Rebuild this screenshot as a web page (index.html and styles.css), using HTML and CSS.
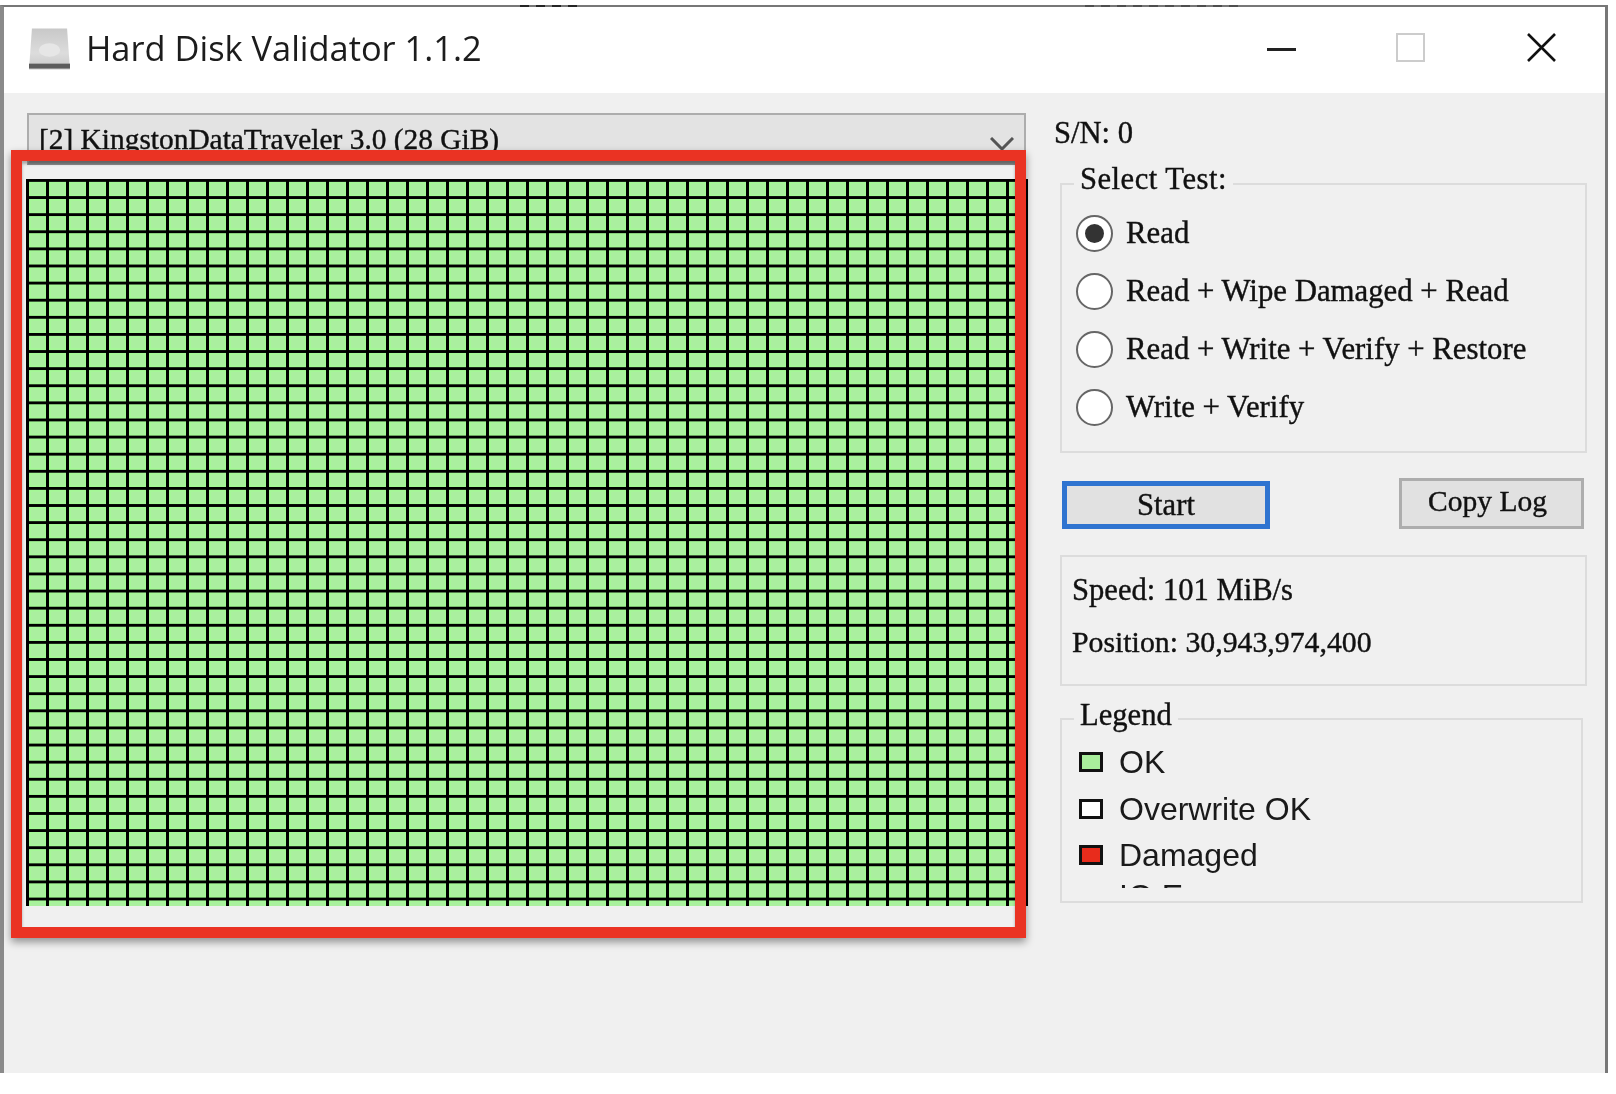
FILE: index.html
```html
<!DOCTYPE html>
<html lang="en">

<head>
    <meta charset="UTF-8">
    <title>Hard Disk Validator 1.1.2</title>
    <link rel="stylesheet" href="styles.css">
</head>

<body>
    <div class="window">
        <!-- Title bar -->
        <div class="titlebar">
            <svg class="app-icon" viewBox="0 0 42 42">
                <defs>
                    <linearGradient id="drive" x1="0" y1="0" x2="0" y2="1">
                        <stop offset="0" stop-color="#c8c8c8" />
                        <stop offset="0.6" stop-color="#dcdcdc" />
                        <stop offset="1" stop-color="#c8c8c8" />
                    </linearGradient>
                </defs>
                <path d="M3 0h36l3 42H0z" fill="url(#drive)" />
                <rect x="0" y="36" width="42" height="5" fill="#5c5c5c" />
                <ellipse cx="21" cy="22" rx="11" ry="7" fill="#e6e6e6" />
            </svg>
            <span class="app-title">Hard Disk Validator 1.1.2</span>
            <div class="caption-buttons">
                <span class="btn-min"></span>
                <span class="btn-max"></span>
                <svg class="btn-close" viewBox="0 0 29 29">
                    <path d="M1 1l27 27M28 1L1 28" stroke="#111" stroke-width="2.6" fill="none" />
                </svg>
            </div>
        </div>

        <div class="client">
            <!-- Left side: drive select and block map -->
            <div class="left-col">
                <div class="combo serif">
                    <span>[2] KingstonDataTraveler 3.0 (28 GiB)</span>
                    <svg class="combo-arrow" viewBox="0 0 24 14">
                        <path d="M1 1l11 11L23 1" stroke="#555" stroke-width="3" fill="none" />
                    </svg>
                </div>
                <div class="block-map"></div>
            </div>

            <!-- Right side: options -->
            <div class="right-col serif">
                <div class="serial">S/N: 0</div>

                <div class="group test-group">
                    <span class="group-title">Select Test:</span>
                    <label class="radio-row"><span class="radio checked"></span>Read</label>
                    <label class="radio-row"><span class="radio"></span>Read + Wipe Damaged + Read</label>
                    <label class="radio-row"><span class="radio"></span>Read + Write + Verify + Restore</label>
                    <label class="radio-row"><span class="radio"></span>Write + Verify</label>
                </div>

                <div class="actions">
                    <button class="btn btn-start">Start</button>
                    <button class="btn btn-copy">Copy Log</button>
                </div>

                <div class="group stats">
                    <div>Speed: 101 MiB/s</div>
                    <div class="position">Position: 30,943,974,400</div>
                </div>

                <div class="group legend">
                    <span class="group-title">Legend</span>
                    <ul class="legend-list">
                        <li><span class="swatch ok"></span>OK</li>
                        <li><span class="swatch overwrite"></span>Overwrite OK</li>
                        <li><span class="swatch damaged"></span>Damaged</li>
                        <li><span class="swatch none"></span>IO Error</li>
                    </ul>
                </div>
            </div>
        </div>
    </div>

    <!-- Bits of the page behind the window, showing along its top edge -->
    <span class="behind behind-a"></span>
    <span class="behind behind-b"></span>

    <!-- Red annotation frame -->
    <div class="highlight"></div>
</body>

</html>
```

FILE: styles.css
```css
html,
body {
    margin: 0;
    height: 1094px;
    overflow: hidden;
    background: #fff;
}

.window {
    box-sizing: border-box;
    width: 1608px;
    height: 1068px;
    margin-top: 5px;
    border-top: 2px solid #777;
    border-left: 4px solid #8a8a8a;
    border-right: 3px solid #777;
    background: #f0f0f0;
    display: flex;
    flex-direction: column;
    filter: blur(0.6px);
}

.titlebar {
    height: 86px;
    background: #fff;
    display: flex;
    align-items: center;
    flex-shrink: 0;
}

.app-icon {
    width: 41px;
    height: 42px;
    margin-left: 25px;
    margin-top: -2px;
}

.app-title {
    margin-left: 16px;
    font-family: "Open Sans", sans-serif;
    font-size: 34.4px;
    color: #1c1c1c;
    margin-top: -5px;
}

.caption-buttons {
    margin-left: auto;
    margin-right: 49px;
    display: flex;
    align-items: center;
    margin-top: -6px;
}

.btn-min {
    width: 29px;
    height: 3px;
    background: #222;
    margin-right: 100px;
    margin-top: 4px;
}

.btn-max {
    box-sizing: border-box;
    width: 29px;
    height: 29px;
    border: 2px solid #ccc;
    margin-right: 102px;
}

.btn-close {
    width: 29px;
    height: 29px;
}

.client {
    flex: 1;
    display: flex;
    min-height: 0;
}

.serif {
    font-family: "Liberation Serif", serif;
    font-size: 30.6px;
    color: #111;
    -webkit-text-stroke: 0.4px #111;
}

.left-col {
    width: 1024px;
    padding: 20px 0 0 23px;
    flex-shrink: 0;
    box-sizing: border-box;
}

.combo {
    box-sizing: border-box;
    height: 52px;
    width: 999px;
    background: #e3e3e3;
    border: 2px solid #adadad;
    border-bottom: 4px solid #8e8e8e;
    padding: 6px 0 0 10px;
    display: flex;
    font-size: 29.4px;
    line-height: 36px;
    white-space: nowrap;
}

.combo-arrow {
    margin: 16px 10px 0 auto;
    width: 24px;
    height: 14px;
}

/* black lines first, then the lighter rim of each cell */
.block-map {
    width: 1002px;
    height: 727px;
    margin: 14px 0 0 -1px;
    background-color: #aaef9f;
    background-image:
        linear-gradient(to right, #000 3px, transparent 3px),
        linear-gradient(to bottom, #000 3px, transparent 3px),
        linear-gradient(to right, transparent 3px, #a4f796 3px, #a4f796 5px, transparent 5px, transparent 18px, #a4f796 18px),
        linear-gradient(to bottom, transparent 3px, #a4f796 3px, #a4f796 5px, transparent 5px, transparent 15px, #a4f796 15px);
    background-size: 20px 17.12px;
}

.right-col {
    flex: 1;
    padding-left: 32px;
    min-width: 0;
}

.serial {
    margin: 22px 0 0 -6px;
    line-height: 36px;
}

.group {
    box-sizing: border-box;
    position: relative;
    width: 527px;
    border: 2px solid #dcdcdc;
}

.group-title {
    position: absolute;
    left: 12px;
    top: -24px;
    background: #f0f0f0;
    padding: 0 6px;
    line-height: 36px;
    letter-spacing: 0.5px;
}

.test-group {
    height: 270px;
    margin-top: 32px;
    padding: 30px 0 0 14px;
}

.radio-row {
    display: flex;
    align-items: center;
    height: 37px;
    margin-bottom: 21px;
    font-size: 30.8px;
    line-height: 37px;
    white-space: nowrap;
}

.radio {
    box-sizing: border-box;
    width: 37px;
    height: 37px;
    border-radius: 50%;
    border: 2.5px solid #666;
    background: #fff;
    margin-right: 13px;
    flex-shrink: 0;
    display: flex;
    align-items: center;
    justify-content: center;
}

.radio.checked::after {
    content: "";
    width: 19px;
    height: 19px;
    border-radius: 50%;
    background: #333;
}

.actions {
    width: 522px;
    display: flex;
    justify-content: space-between;
    align-items: flex-end;
    margin: 25px 0 26px 2px;
}

.btn {
    box-sizing: border-box;
    font: inherit;
    color: inherit;
    background: #e1e1e1;
    padding: 0;
    border-radius: 0;
}

.btn-start {
    width: 208px;
    height: 48px;
    border: 5px solid #2f74d0;
}

.btn-copy {
    width: 185px;
    height: 51px;
    border: 3px solid #adadad;
    padding: 0 8px 5px 0;
    font-size: 29.5px;
}

.stats {
    height: 131px;
    padding: 15px 0 0 10px;
    line-height: 36px;
}

.stats .position {
    margin-top: 16px;
    font-size: 29.8px;
}

.legend {
    width: 523px;
    height: 185px;
    margin-top: 32px;
}

.legend .group-title {
    top: -23px;
    letter-spacing: 0;
}

.legend-list {
    list-style: none;
    margin: 0;
    padding: 0 0 0 17px;
    height: 168px;
    overflow: hidden;
    font-family: "Liberation Sans", sans-serif;
    font-size: 32px;
    color: #1a1a1a;
    -webkit-text-stroke: 0;
}

.legend-list li {
    display: flex;
    align-items: center;
    height: 46.5px;
    line-height: 46.5px;
    white-space: nowrap;
}

.legend-list li:first-child {
    margin-top: 19px;
}

.legend-list li:last-child {
    margin-top: -6px;
}

.swatch {
    box-sizing: border-box;
    width: 24px;
    height: 20px;
    border: 3px solid #111;
    margin-right: 16px;
    flex-shrink: 0;
}

.swatch.ok {
    background: #a9ee9c;
}

.swatch.overwrite {
    background: #fff;
}

.swatch.damaged {
    background: #e82c1c;
}

.swatch.none {
    visibility: hidden;
}

.behind {
    position: absolute;
    top: 5px;
    height: 2px;
    opacity: 0.8;
    background: repeating-linear-gradient(to right, #111 0 9px, transparent 9px 16px);
}

.behind-a {
    left: 520px;
    width: 57px;
}

.behind-b {
    left: 1085px;
    width: 155px;
    opacity: 0.4;
}

.highlight {
    position: absolute;
    left: 11px;
    top: 150px;
    width: 1015px;
    height: 788px;
    box-sizing: border-box;
    border: 11px solid #ea3323;
    box-shadow: 0 4px 8px rgba(0, 0, 0, 0.4), inset 0 3px 3px rgba(0, 0, 0, 0.3);
}
```
